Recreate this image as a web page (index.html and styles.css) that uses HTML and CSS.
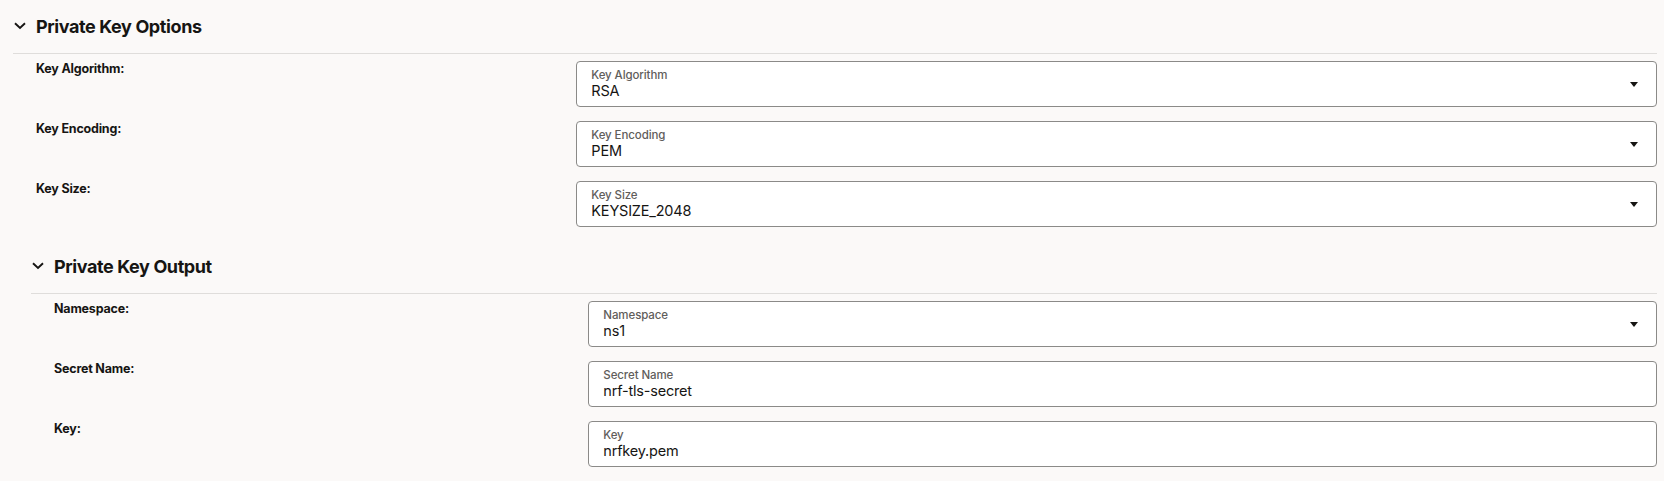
FILE: index.html
```html
<!DOCTYPE html>
<html lang="en">
<head>
<meta charset="utf-8">
<title>Private Key Options</title>
<link rel="stylesheet" href="styles.css">
</head>
<body>
<section class="section outer">
  <div class="sec-header">
    <span class="chev"><svg width="12" height="8" viewBox="0 0 12 8"><path d="M1 1.2 L6 6 L11 1.2" fill="none" stroke="#161513" stroke-width="1.9"/></svg></span>
    <h2 class="sec-title">Private Key Options</h2>
  </div>
  <div class="rows">
    <div class="row">
      <div class="row-label">Key Algorithm:</div>
      <div class="field select">
        <div class="field-text"><span class="f-label">Key Algorithm</span><span class="f-value">RSA</span></div>
        <span class="caret"></span>
      </div>
    </div>
    <div class="row">
      <div class="row-label">Key Encoding:</div>
      <div class="field select">
        <div class="field-text"><span class="f-label">Key Encoding</span><span class="f-value">PEM</span></div>
        <span class="caret"></span>
      </div>
    </div>
    <div class="row">
      <div class="row-label">Key Size:</div>
      <div class="field select">
        <div class="field-text"><span class="f-label">Key Size</span><span class="f-value">KEYSIZE_2048</span></div>
        <span class="caret"></span>
      </div>
    </div>
  </div>

  <section class="section inner">
    <div class="sec-header">
      <span class="chev"><svg width="12" height="8" viewBox="0 0 12 8"><path d="M1 1.2 L6 6 L11 1.2" fill="none" stroke="#161513" stroke-width="1.9"/></svg></span>
      <h2 class="sec-title">Private Key Output</h2>
    </div>
    <div class="rows">
      <div class="row">
        <div class="row-label">Namespace:</div>
        <div class="field select">
          <div class="field-text"><span class="f-label">Namespace</span><span class="f-value">ns1</span></div>
          <span class="caret"></span>
        </div>
      </div>
      <div class="row">
        <div class="row-label">Secret Name:</div>
        <div class="field">
          <div class="field-text"><span class="f-label">Secret Name</span><span class="f-value">nrf-tls-secret</span></div>
        </div>
      </div>
      <div class="row">
        <div class="row-label">Key:</div>
        <div class="field">
          <div class="field-text"><span class="f-label">Key</span><span class="f-value">nrfkey.pem</span></div>
        </div>
      </div>
    </div>
  </section>
</section>
</body>
</html>
```

FILE: styles.css
```css
* { box-sizing: border-box; }
html, body { margin: 0; padding: 0; }
body {
  background: #fbf9f8;
  color: #161513;
  font-family: "Inter", "Liberation Sans", sans-serif;
  height: 481px;
  overflow: hidden;
}
.section.outer {
  padding: 10px 7px 0 13px;
}
.section.inner {
  padding-left: 18px;
  margin-top: 23px;
}
.sec-header {
  display: flex;
  align-items: flex-start;
  height: 44px;
  padding-top: 5px;
  border-bottom: 1px solid #dfdddb;
}
.sec-header .chev {
  width: 23px;
  display: flex;
  padding-left: 1px;
  margin-top: 7px;
}
.sec-title {
  margin: 0;
  font-size: 18px;
  line-height: 24px;
  font-weight: 700;
  letter-spacing: -0.4px;
}
.rows {
  padding: 7px 0 0 23px;
  display: flex;
  flex-direction: column;
  gap: 14px;
}
.row {
  display: grid;
  grid-template-columns: 1fr 2fr;
}
.row-label {
  font-size: 12.5px;
  font-weight: 700;
  line-height: 15px;
  letter-spacing: -0.2px;
}
.field {
  height: 46px;
  background: #fff;
  border: 1px solid #8b8a88;
  border-radius: 4px;
  display: flex;
  align-items: center;
  padding: 0 18px 0 14px;
}
.field-text {
  flex: 1;
  display: flex;
  flex-direction: column;
}
.f-label {
  font-size: 11.5px;
  line-height: 13px;
  font-weight: 500;
  color: #5f5d5b;
  letter-spacing: -0.1px;
}
.f-value {
  font-size: 14.5px;
  line-height: 18px;
  letter-spacing: -0.2px;
}
.caret {
  width: 0;
  height: 0;
  border-left: 4px solid transparent;
  border-right: 4px solid transparent;
  border-top: 5px solid #161513;
}
```
